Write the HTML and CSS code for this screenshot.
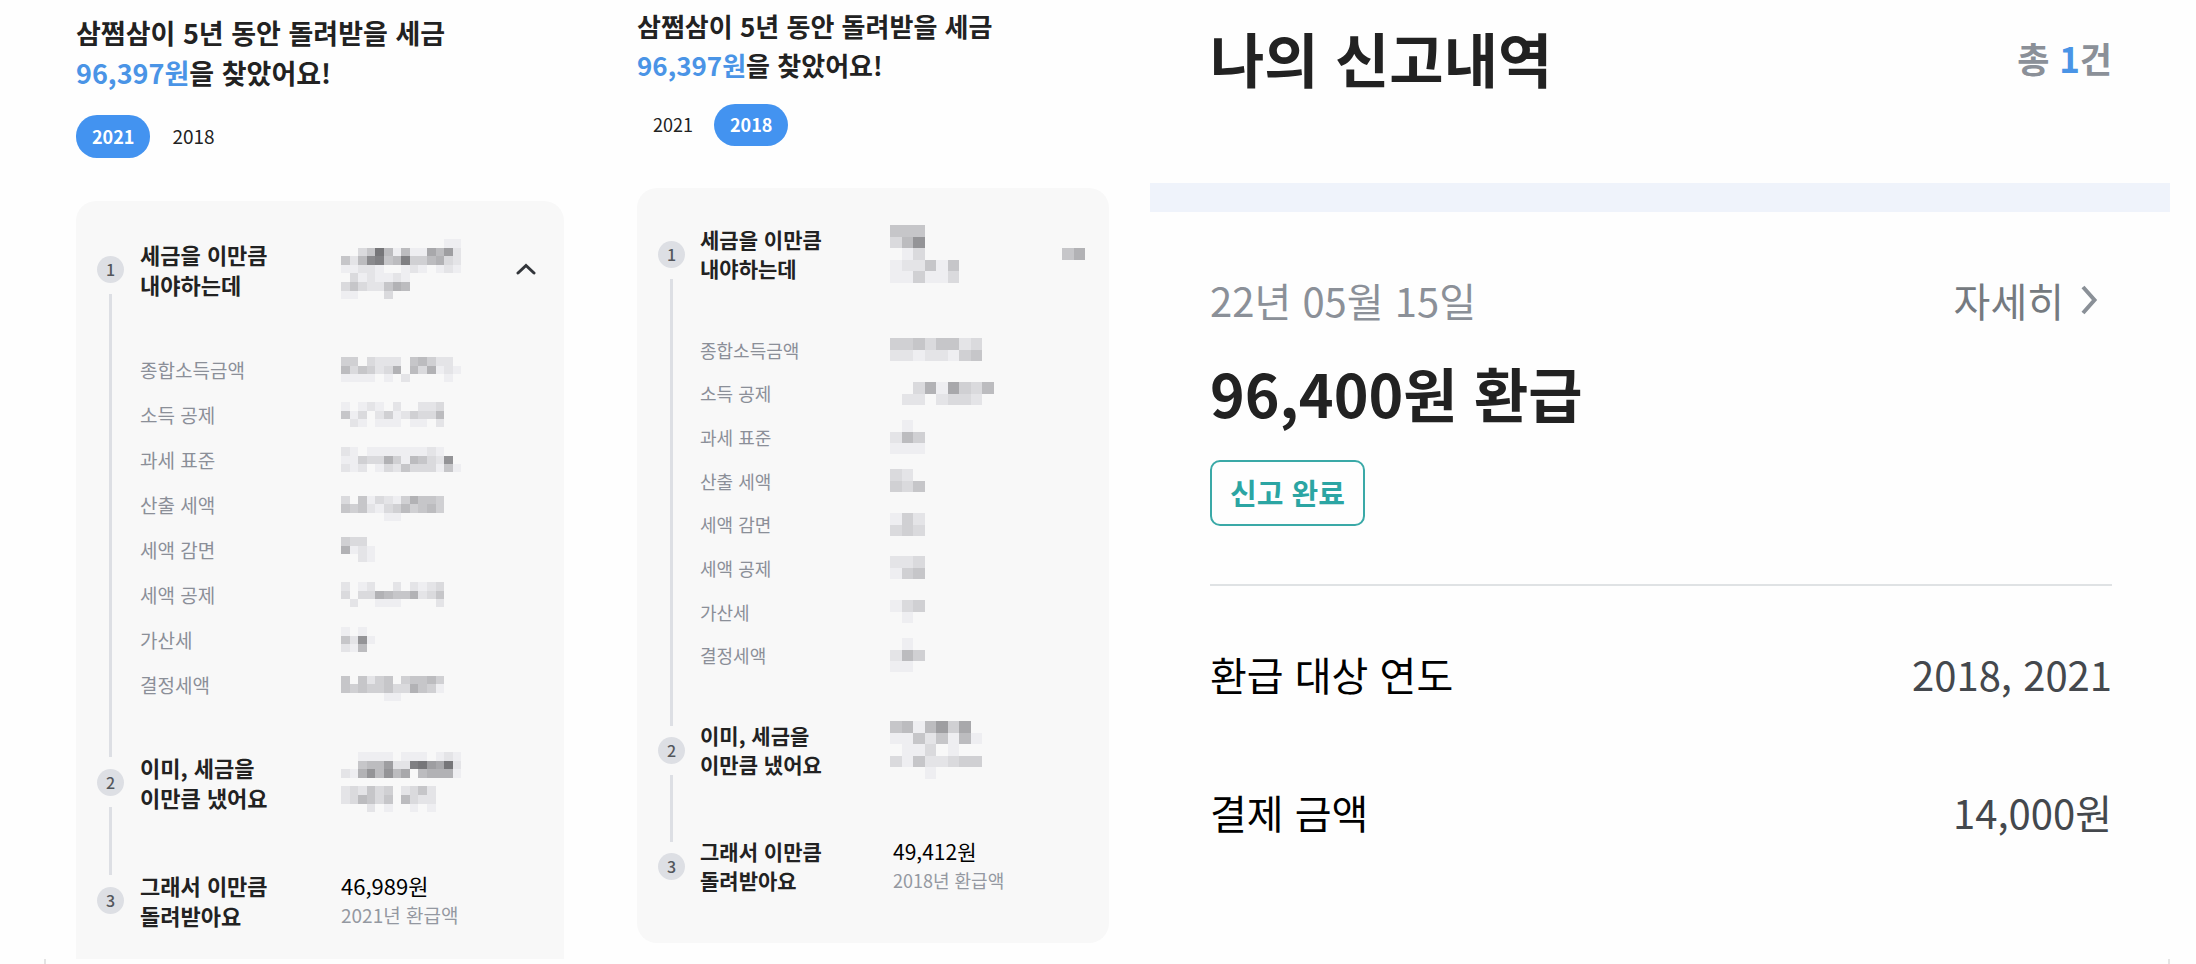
FILE: index.html
```html
<!DOCTYPE html>
<html lang="ko">
<head>
  <meta charset="UTF-8" />
  <meta name="viewport" content="width=device-width, initial-scale=1.0" />
  <title>나의 신고내역</title>
  <link rel="stylesheet" href="styles.css">
</head>
<body>
  <main>
    <!-- 2021년 -->
    <section class="panel panel-2021" data-cell="8.6">
      <h2>삼쩜삼이 5년 동안 돌려받을 세금<br><span class="blue">96,397원</span>을 찾았어요!</h2>
      <div class="tabs">
        <button class="tab active">2021</button>
        <button class="tab">2018</button>
      </div>
      <div class="card">
        <div class="step">
          <div class="marker"><span class="num">1</span><span class="line"></span></div>
          <div class="content">
            <div class="head">
              <h3>세금을 이만큼<br>내야하는데</h3>
              <svg class="mosaic" data-cells="00000000000011/0035d616118692/526bc56c446732/11221001210121/03121121/35322576/11000300"></svg>
              <button class="toggle" aria-label="접기">
                <svg width="20" height="12" viewBox="0 0 20 12"><path d="M2 10 L10 2.5 L18 10" fill="none" stroke="#33363b" stroke-width="3" stroke-linecap="round" /></svg>
              </button>
            </div>
            <dl class="details">
              <div><dt>종합소득금액</dt><dd><svg class="mosaic" data-cells="44032220564220/63542370637121/11110102000010"></svg></dd></div>
              <div><dt>소득 공제</dt><dd><svg class="mosaic" data-cells="101210200223/513024124336/021011101102"></svg></dd></div>
              <div><dt>과세 표준</dt><dd><svg class="mosaic" data-cells="21011111112100/114337416532a0/21201325333151"></svg></dd></div>
              <div><dt>산출 세액</dt><dd><svg class="mosaic" data-cells="000000000000/305132147554/545213464564/000001100000"></svg></dd></div>
              <div><dt>세액 감면</dt><dd><svg class="mosaic" data-cells="4330/7121/0021"></svg></dd></div>
              <div><dt>세액 공제</dt><dd><svg class="mosaic" data-cells="201200202123/303376557235/020011100002"></svg></dd></div>
              <div><dt>가산세</dt><dd><svg class="mosaic" data-cells="1010/52a1/2160"></svg></dd></div>
              <div><dt>결정세액</dt><dd><svg class="mosaic" data-cells="000000000000/505245045564/545445337541/000001100000"></svg></dd></div>
            </dl>
          </div>
        </div>
        <div class="step">
          <div class="marker"><span class="num">2</span><span class="line"></span></div>
          <div class="content">
            <div class="head">
              <h3>이미, 세금을<br>이만큼 냈어요</h3>
              <svg class="mosaic" data-cells="00111101110121/00566922cd98d2/217a6a68067771/00000000000000/23253402352/23653506322/00020100101"></svg>
            </div>
          </div>
        </div>
        <div class="step">
          <div class="marker"><span class="num">3</span></div>
          <div class="content">
            <div class="head">
              <h3>그래서 이만큼<br>돌려받아요</h3>
              <p class="amount">46,989원<small>2021년 환급액</small></p>
            </div>
          </div>
        </div>
      </div>
    </section>

    <!-- 2018년 -->
    <section class="panel panel-2018" data-cell="11.5">
      <h2>삼쩜삼이 5년 동안 돌려받을 세금<br><span class="blue">96,397원</span>을 찾았어요!</h2>
      <div class="tabs">
        <button class="tab">2021</button>
        <button class="tab active">2018</button>
      </div>
      <div class="card">
        <div class="step">
          <div class="marker"><span class="num">1</span><span class="line"></span></div>
          <div class="content">
            <div class="head">
              <h3>세금을 이만큼<br>내야하는데</h3>
              <svg class="mosaic" data-cells="555/36a/013/122515/114113"></svg>
              <button class="toggle" aria-label="접기"><svg class="mosaic" data-cells="57"></svg></button>
            </div>
            <dl class="details">
              <div><dt>종합소득금액</dt><dd><svg class="mosaic" data-cells="44535523/22122145"></svg></dd></div>
              <div><dt>소득 공제</dt><dd><svg class="mosaic" data-cells="003718436/022023320"></svg></dd></div>
              <div><dt>과세 표준</dt><dd><svg class="mosaic" data-cells="010/264/111"></svg></dd></div>
              <div><dt>산출 세액</dt><dd><svg class="mosaic" data-cells="320/435"></svg></dd></div>
              <div><dt>세액 감면</dt><dd><svg class="mosaic" data-cells="142/343"></svg></dd></div>
              <div><dt>세액 공제</dt><dd><svg class="mosaic" data-cells="223/145"></svg></dd></div>
              <div><dt>가산세</dt><dd><svg class="mosaic" data-cells="134/010"></svg></dd></div>
              <div><dt>결정세액</dt><dd><svg class="mosaic" data-cells="010/264/110"></svg></dd></div>
            </dl>
          </div>
        </div>
        <div class="step">
          <div class="marker"><span class="num">2</span><span class="line"></span></div>
          <div class="content">
            <div class="head">
              <h3>이미, 세금을<br>이만큼 냈어요</h3>
              <svg class="mosaic" data-cells="56169480/11525161/01130100/31522344/00010000"></svg>
            </div>
          </div>
        </div>
        <div class="step">
          <div class="marker"><span class="num">3</span></div>
          <div class="content">
            <div class="head">
              <h3>그래서 이만큼<br>돌려받아요</h3>
              <p class="amount">49,412원<small>2018년 환급액</small></p>
            </div>
          </div>
        </div>
      </div>
    </section>

    <!-- 신고내역 -->
    <section class="history">
      <header>
        <h1>나의 신고내역</h1>
        <p class="count">총 <span class="blue">1</span>건</p>
      </header>
      <div class="report">
        <div class="row date">
          <span>22년 05월 15일</span>
          <a href="#">자세히
            <svg width="18" height="30" viewBox="0 0 18 30"><path d="M3 2 L14.5 15 L3 28" fill="none" stroke="#8a9097" stroke-width="4" /></svg>
          </a>
        </div>
        <p class="refund">96,400원 환급</p>
        <span class="badge">신고 완료</span>
        <dl class="summary">
          <div class="row"><dt>환급 대상 연도</dt><dd>2018, 2021</dd></div>
          <div class="row"><dt>결제 금액</dt><dd>14,000원</dd></div>
        </dl>
      </div>
    </section>
  </main>
  <footer></footer>

  <script src="script.js"></script>
</body>
</html>
```
FILE: styles.css
```css
* {
  margin: 0;
  padding: 0;
  box-sizing: border-box;
}

body {
  display: flex;
  flex-direction: column;
  min-height: 100vh;
  font-family: 'Noto Sans CJK KR', 'Noto Sans', sans-serif;
  background-color: #fefefe;
  color: #222;
}

button {
  border: none;
  background: none;
  font-family: inherit;
  color: inherit;
  cursor: pointer;
}

svg {
  display: block;
}

main {
  display: flex;
  align-items: flex-start;
  padding: 0 26px 0 76px;
}

.blue {
  color: #4a94e6;
}

/* 연도별 환급 */
.panel {
  flex: 488 1 0;
  padding-top: 13px;
}

h2 {
  font-size: 27px;
  line-height: 40px;
  white-space: nowrap;
}

.tabs {
  display: flex;
  gap: 6px;
  margin: 22px 0 43px;
}

.tab {
  height: 43px;
  padding: 0 16px 2px;
  border-radius: 21px;
  font-size: 19px;
}

.tab.active {
  background-color: #4393f0;
  color: white;
  font-size: 18px;
  font-weight: 700;
}

.card {
  padding: 38px 28px 29px 21px;
  border-radius: 20px 20px 0 0;
  background-color: #f8f8f8;
}

.step {
  display: flex;
  gap: 16px;
}

.marker {
  display: flex;
  flex-direction: column;
  align-items: center;
  gap: 11px;
  padding-top: 17px;
}

.num {
  width: 27px;
  height: 27px;
  border-radius: 50%;
  background-color: #dddfe4;
  color: #54575c;
  font-size: 16px;
  font-weight: 500;
  line-height: 27px;
  text-align: center;
}

.line {
  flex: 1;
  width: 3px;
  margin-bottom: -5px;
  background-color: #dddfe4;
}

.content {
  flex: 1;
  padding-bottom: 58px;
}

.step:first-child .content {
  padding-bottom: 45px;
}

.step:last-child .content {
  padding-bottom: 0;
}

.head {
  display: flex;
  align-items: center;
  height: 60px;
}

h3,
.details dt {
  width: 201px;
}

h3 {
  font-size: 22px;
  line-height: 30px;
}

.toggle {
  margin-left: auto;
}

.details {
  display: flex;
  flex-direction: column;
  height: 360px;
  margin-top: 48px;
}

.details div {
  display: flex;
  flex: 1;
  align-items: center;
}

.details dt {
  font-size: 19px;
  line-height: 30px;
  color: #8b8f98;
}

.amount {
  font-size: 22px;
  line-height: 30px;
  color: #000;
}

.amount small {
  display: block;
  font-size: 19px;
  color: #9498a1;
}

.panel-2018 {
  flex-grow: 472;
  margin-left: 73px;
  padding-top: 6px;
}

.panel-2018 h2 {
  font-size: 26px;
  line-height: 39px;
}

.panel-2018 .tabs {
  gap: 5px;
  margin: 20px 0 42px;
}

.panel-2018 .tab {
  height: 42px;
  font-size: 18px;
}

.panel-2018 .card {
  padding: 37px 24px 48px 21px;
  border-radius: 20px;
}

.panel-2018 .step {
  gap: 15px;
}

.panel-2018 .marker {
  padding-top: 16px;
}

.panel-2018 .head {
  height: 58px;
}

.panel-2018 h3,
.panel-2018 .details dt {
  width: 193px;
}

.panel-2018 h3,
.panel-2018 .amount {
  font-size: 21px;
  line-height: 29px;
}

.panel-2018 .details {
  height: 349px;
  margin-top: 45px;
}

.panel-2018 .details dt,
.panel-2018 .amount small {
  font-size: 18px;
}

.panel-2018 .step:first-child .content {
  padding-bottom: 44px;
}

.panel-2018 h3 + .mosaic,
.panel-2018 dd .mosaic {
  margin-left: -3px;
}

/* 신고내역 */
.history {
  flex: 1020 1 0;
  margin-left: 41px;
}

.history header {
  display: flex;
  justify-content: space-between;
  align-items: center;
  height: 212px;
  padding: 0 58px 68px 60px;
  border-bottom: 29px solid #eff3fb;
}

h1 {
  font-size: 59px;
  line-height: 80px;
}

.count {
  font-size: 35px;
  font-weight: 700;
  color: #8b9098;
}

.report {
  padding: 58px 58px 0 60px;
}

.row {
  display: flex;
  justify-content: space-between;
  align-items: center;
  font-size: 40px;
  line-height: 60px;
}

.date {
  color: #8b9098;
}

.date a {
  display: flex;
  align-items: center;
  gap: 16px;
  padding-right: 14px;
  color: #757a80;
  text-decoration: none;
}

.refund {
  margin-top: 18px;
  font-size: 59px;
  font-weight: 700;
  line-height: 90px;
}

.badge {
  display: block;
  width: fit-content;
  margin-top: 22px;
  padding: 0 18px 2px;
  border: 2px solid #3aa9a7;
  border-radius: 10px;
  color: #2ba5a3;
  font-size: 29px;
  font-weight: 700;
  line-height: 60px;
}

.summary {
  display: flex;
  flex-direction: column;
  gap: 78px;
  margin-top: 58px;
  padding-top: 58px;
  border-top: 2px solid #dfe2e4;
}

.summary dt {
  color: #000;
}

.summary dd {
  color: #44484d;
}

footer {
  height: 5px;
  margin: auto 26px 0 44px;
  border: solid #e4e4e4;
  border-width: 0 2px;
}
```
FILE: script.js
```js
// 모자이크 처리된 금액: 한 글자가 한 칸의 진하기(0~f), "/"는 줄바꿈
document.querySelectorAll('.mosaic').forEach(svg => {
  const size = Number(svg.closest('.panel').dataset.cell);
  const rows = svg.dataset.cells.split('/');
  const cols = Math.max(...rows.map(row => row.length));

  svg.setAttribute('width', cols * size);
  svg.setAttribute('height', rows.length * size);
  svg.setAttribute('viewBox', `0 0 ${cols} ${rows.length}`);
  svg.setAttribute('shape-rendering', 'crispEdges');

  rows.forEach((row, y) => {
    [...row].forEach((cell, x) => {
      const level = parseInt(cell, 16);
      if (!level) return;
      const gray = 248 - level * 10;
      const rect = document.createElementNS('http://www.w3.org/2000/svg', 'rect');
      rect.setAttribute('x', x);
      rect.setAttribute('y', y);
      rect.setAttribute('width', 1);
      rect.setAttribute('height', 1);
      rect.setAttribute('fill', `rgb(${gray}, ${gray}, ${gray + 3})`);
      svg.appendChild(rect);
    });
  });
});
```
